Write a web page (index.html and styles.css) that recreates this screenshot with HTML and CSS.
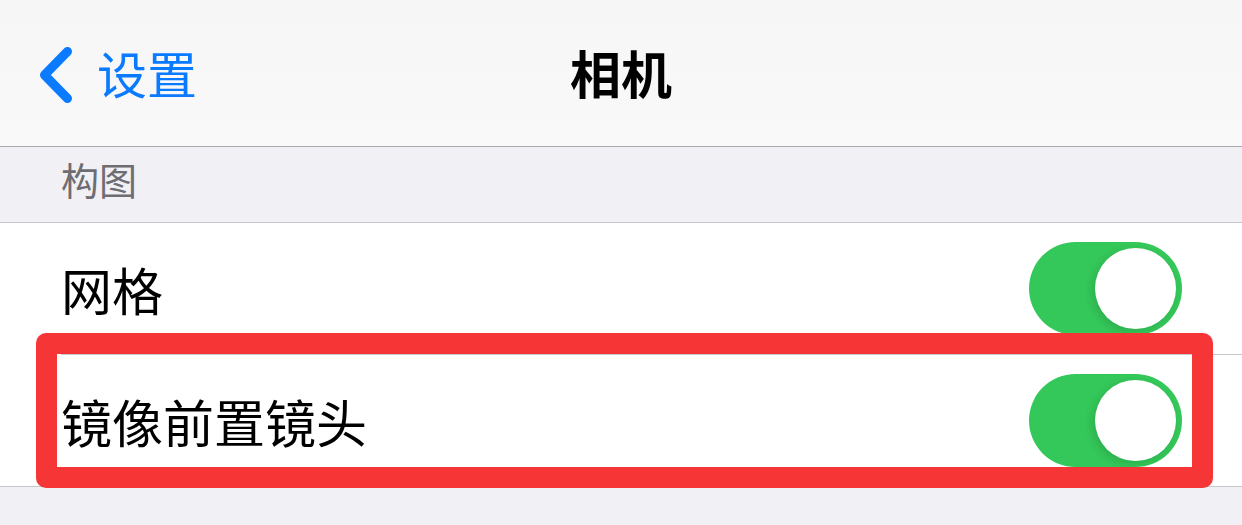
FILE: index.html
```html
<!DOCTYPE html>
<html lang="zh-CN">
<head>
    <meta charset="UTF-8">
    <meta name="viewport" content="width=device-width, initial-scale=1.0">
    <title>相机</title>
    <link rel="stylesheet" href="styles.css">
</head>
<body>
    <div class="navbar">
        <div class="back">
            <svg class="chevron" width="34" height="58" viewBox="0 0 34 58">
                <polyline points="28.5,5.5 5.5,29 28.5,52.5" fill="none" stroke="#0a7aff" stroke-width="9" stroke-linecap="round" stroke-linejoin="round"/>
            </svg>
            <span class="back-label">设置</span>
        </div>
        <div class="title">相机</div>
    </div>
    <div class="section-header">构图</div>
    <div class="list">
        <div class="row">
            <span class="row-label">网格</span>
            <div class="switch on"><div class="knob"></div></div>
        </div>
        <div class="separator"></div>
        <div class="row">
            <span class="row-label">镜像前置镜头</span>
            <div class="switch on"><div class="knob"></div></div>
        </div>
    </div>
    <div class="highlight"></div>
</body>
</html>
```

FILE: styles.css
```css
* {
    margin: 0;
    padding: 0;
    box-sizing: border-box;
    font-family: "Noto Sans CJK SC", "Noto Sans", sans-serif;
}
body {
    width: 1242px;
    height: 525px;
    background-color: #f0f0f5;
    position: relative;
    overflow: hidden;
}
.navbar {
    height: 147px;
    background: linear-gradient(#f6f6f7, #f9f9fa);
    border-bottom: 1px solid #a8a8ad;
    display: flex;
    align-items: center;
    position: relative;
}
.back {
    display: flex;
    align-items: center;
    padding-left: 39px;
    gap: 24px;
    margin-top: -2px;
}
.chevron {
    display: block;
    margin-top: 5px;
}
.back-label {
    font-size: 50px;
    color: #0a7aff;
    line-height: 1;
}
.title {
    position: absolute;
    left: 0;
    right: 0;
    text-align: center;
    font-size: 51px;
    font-weight: bold;
    color: #000;
    margin-top: -2px;
}
.section-header {
    height: 76px;
    padding: 8px 0 0 61px;
    font-size: 38px;
    line-height: 48px;
    color: #6d6d72;
    border-bottom: 1px solid #c8c7cc;
}
.list {
    background: #fff;
    border-bottom: 1px solid #c8c7cc;
}
.row {
    height: 131px;
    display: flex;
    align-items: center;
    justify-content: space-between;
    padding: 0 60px 0 61px;
}
.separator {
    height: 1px;
    margin-left: 61px;
    background: #c8c7cc;
}
.row-label {
    font-size: 51px;
    color: #000;
}
.switch {
    width: 153px;
    height: 93px;
    border-radius: 47px;
    background: #34c759;
    position: relative;
}
.knob {
    position: absolute;
    top: 6px;
    right: 6px;
    width: 81px;
    height: 81px;
    border-radius: 50%;
    background: #fff;
    box-shadow: -3px 3px 8px rgba(0, 0, 0, 0.12);
}
.highlight {
    position: absolute;
    left: 36px;
    top: 333px;
    width: 1177px;
    height: 155px;
    border: 21px solid #f63537;
    border-radius: 10px;
}
```
